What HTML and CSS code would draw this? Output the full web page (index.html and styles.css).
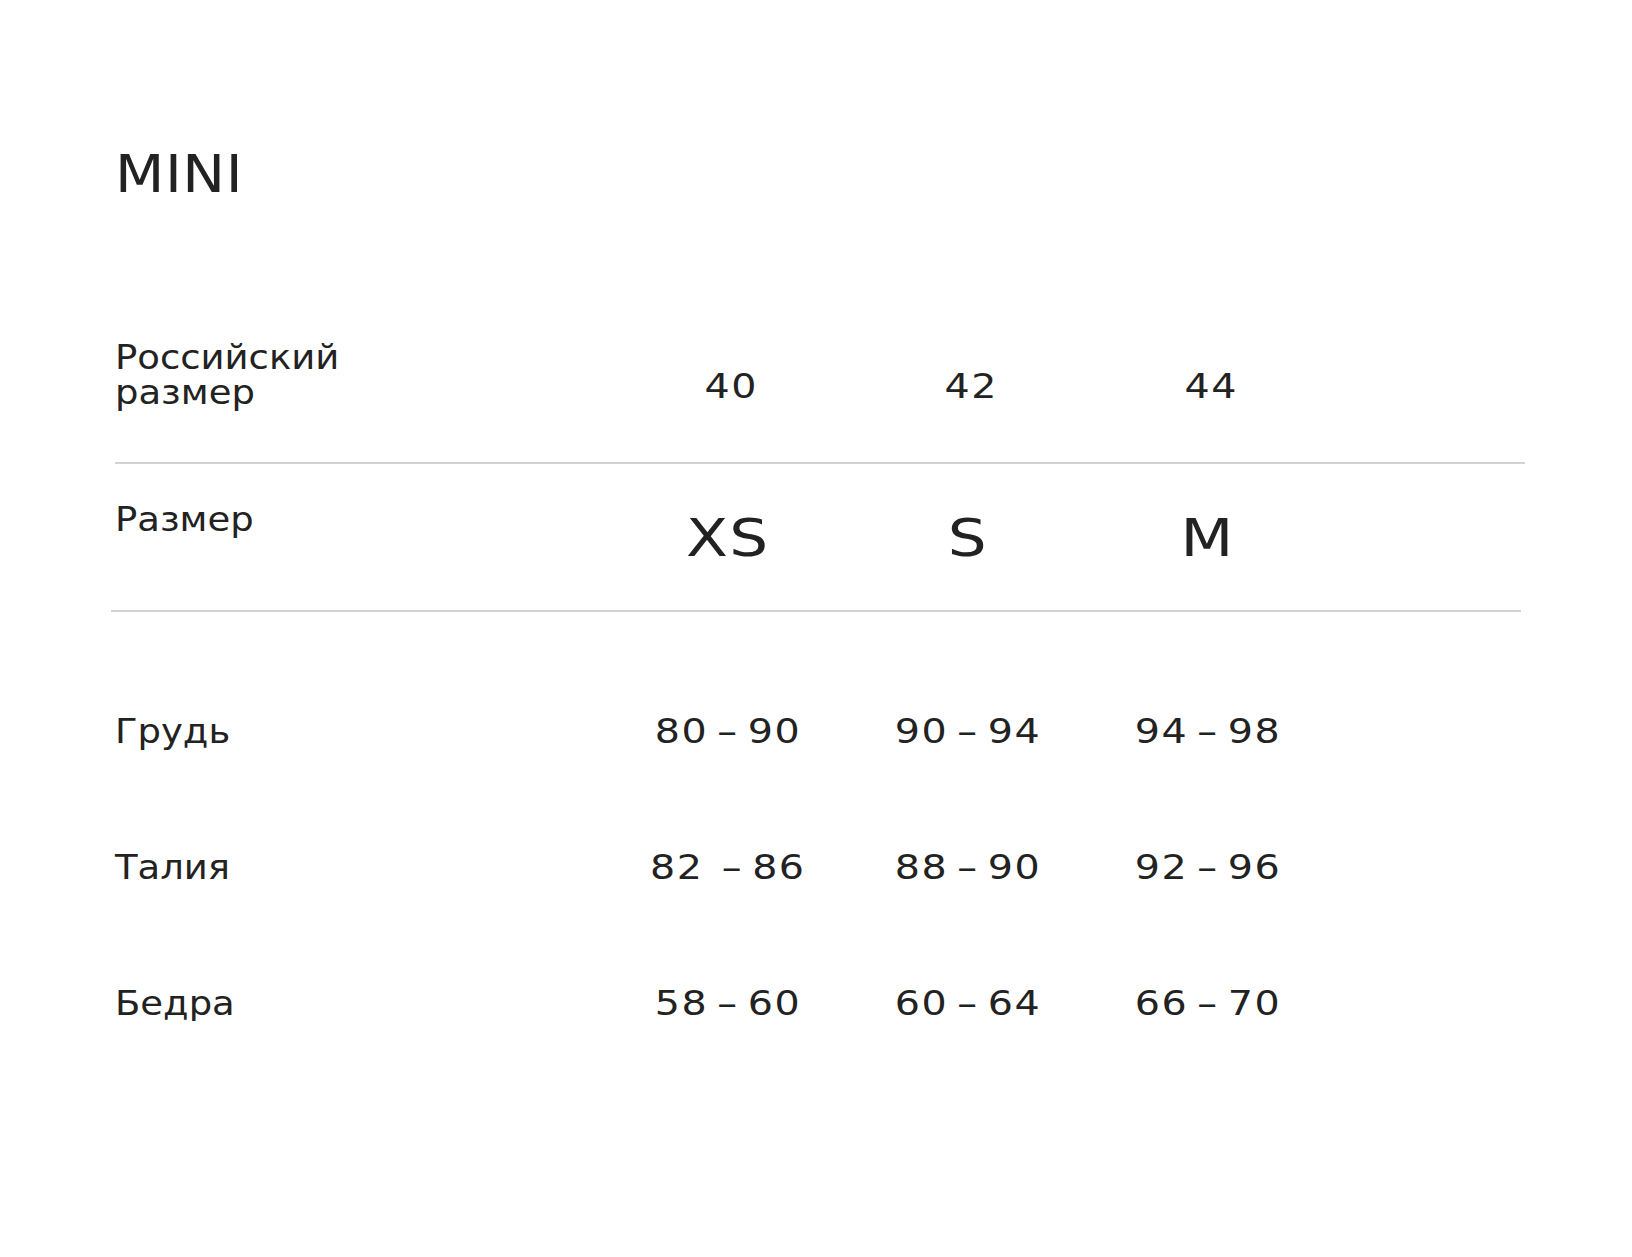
FILE: index.html
```html
<!DOCTYPE html>
<html lang="ru">
<head>
<meta charset="utf-8">
<title>MINI — размеры</title>
<link rel="stylesheet" href="styles.css">
</head>
<body>
<main class="page">
  <h1 class="title"><span class="wide">MINI</span></h1>
  <section class="chart">
    <div class="row row-head">
      <div class="label"><span class="wide">Российский<br>размер</span></div>
      <div class="cell num-head"><span class="wide">40</span></div>
      <div class="cell num-head"><span class="wide">42</span></div>
      <div class="cell num-head"><span class="wide">44</span></div>
    </div>
    <div class="divider"></div>
    <div class="row row-size">
      <div class="label"><span class="wide">Размер</span></div>
      <div class="cell size"><span class="wide">XS</span></div>
      <div class="cell size"><span class="wide">S</span></div>
      <div class="cell size"><span class="wide">M</span></div>
    </div>
    <div class="divider divider-shift"></div>
    <div class="rows">
      <div class="row row-data">
        <div class="label"><span class="wide">Грудь</span></div>
        <div class="cell"><span class="wide">80 – 90</span></div>
        <div class="cell"><span class="wide">90 – 94</span></div>
        <div class="cell"><span class="wide">94 – 98</span></div>
      </div>
      <div class="row row-data">
        <div class="label"><span class="wide">Талия</span></div>
        <div class="cell"><span class="wide">82&nbsp; – 86</span></div>
        <div class="cell"><span class="wide">88 – 90</span></div>
        <div class="cell"><span class="wide">92 – 96</span></div>
      </div>
      <div class="row row-data">
        <div class="label"><span class="wide">Бедра</span></div>
        <div class="cell"><span class="wide">58 – 60</span></div>
        <div class="cell"><span class="wide">60 – 64</span></div>
        <div class="cell"><span class="wide">66 – 70</span></div>
      </div>
    </div>
  </section>
</main>
</body>
</html>
```
FILE: styles.css
```css
html, body {
  margin: 0;
  padding: 0;
  background: #ffffff;
}

body {
  font-family: "DejaVu Sans", "Liberation Sans", sans-serif;
  color: #222222;
}

.page {
  padding: 0 107px 0 115px;
}

.wide {
  display: inline-block;
  transform: scaleX(1.12);
}

.title {
  margin: 148px 0 0;
  font-size: 52px;
  line-height: 52px;
  font-weight: 400;
  letter-spacing: 0.5px;
}

.title .wide {
  transform-origin: left center;
  transform: scaleX(1.1);
}

.chart {
  margin-top: 140px;
}

.row {
  display: grid;
  grid-template-columns: 493px 240px 240px 240px;
  align-items: start;
  font-size: 33px;
  line-height: 35px;
}

.label .wide {
  transform-origin: left center;
}

.cell {
  text-align: center;
  letter-spacing: 1.2px;
  word-spacing: -4px;
}

.cell .wide {
  transform: scaleX(1.2);
}

.row-head {
  padding-bottom: 52px;
}

.num-head {
  padding-top: 29px;
  padding-left: 7px;
}

.divider {
  height: 2px;
  background: #d2d2d2;
}

.divider-shift {
  margin-left: -4px;
  margin-right: 4px;
}

.row-size {
  box-sizing: border-box;
  height: 146px;
  padding-top: 38px;
}

.size {
  padding-top: 11px;
  font-size: 51px;
  line-height: 51px;
  letter-spacing: 1px;
}

.rows {
  display: flex;
  flex-direction: column;
  gap: 101px;
  padding-top: 102px;
}
```
